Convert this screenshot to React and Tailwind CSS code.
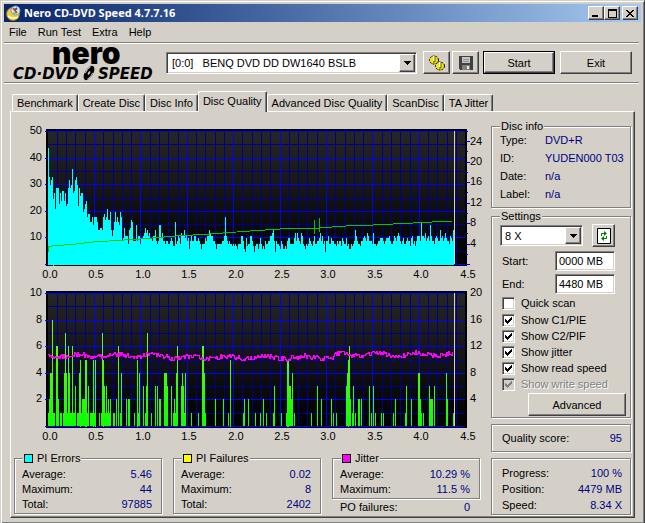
import { useState } from "react";

const raised = "bg-[#d4d0c8] border border-t-white border-l-white border-r-[#404040] border-b-[#404040] shadow-[inset_-1px_-1px_0_#808080]";
const sunken = "bg-white border border-t-[#808080] border-l-[#808080] border-r-white border-b-white shadow-[inset_1px_1px_0_#404040,inset_-1px_-1px_0_#d4d0c8]";
const etched = "border border-[#808080] shadow-[1px_1px_0_#fff,inset_1px_1px_0_#fff]";

// one sample per pixel column
const pie = [
  44, 33, 30, 32, 33, 25, 27, 21, 29, 29, 29, 23, 27, 24, 28, 28, 24, 27, 22, 23, 29, 32, 29, 30, 36, 27, 28, 32, 33, 30,
  22, 29, 26, 27, 27, 20, 21, 23, 24, 18, 19, 19, 16, 16, 18, 15, 18, 18, 18, 16, 13, 13, 14, 14, 13, 18, 19, 17, 18, 21,
  17, 17, 20, 13, 11, 13, 16, 20, 16, 18, 16, 15, 20, 18, 9, 10, 14, 11, 11, 11, 8, 13, 14, 17, 16, 9, 9, 9, 15, 9,
  11, 11, 8, 10, 10, 11, 12, 14, 12, 13, 11, 12, 10, 10, 9, 11, 11, 13, 9, 8, 9, 15, 15, 10, 12, 9, 9, 8, 9, 9,
  8, 8, 9, 10, 9, 7, 7, 16, 8, 9, 11, 10, 8, 12, 11, 11, 13, 10, 11, 9, 10, 6, 9, 11, 9, 9, 11, 11, 9, 9,
  10, 9, 8, 6, 8, 8, 8, 10, 9, 11, 11, 13, 12, 11, 11, 9, 9, 8, 6, 8, 8, 8, 8, 8, 9, 9, 11, 18, 11, 9,
  8, 9, 8, 8, 7, 8, 7, 8, 7, 6, 8, 8, 8, 11, 11, 9, 6, 5, 10, 7, 8, 8, 11, 11, 9, 7, 5, 7, 8, 8,
  6, 8, 10, 8, 6, 7, 6, 9, 8, 8, 9, 9, 11, 11, 12, 13, 9, 5, 9, 8, 8, 7, 6, 9, 8, 6, 6, 7, 6, 9,
  10, 10, 8, 8, 8, 8, 10, 12, 9, 12, 10, 9, 8, 12, 11, 8, 7, 6, 8, 7, 8, 10, 9, 8, 7, 9, 11, 8, 8, 9,
  9, 10, 12, 9, 11, 8, 9, 5, 9, 9, 11, 8, 8, 10, 9, 9, 8, 8, 7, 9, 8, 9, 9, 7, 10, 9, 8, 8, 10, 7,
  8, 6, 6, 8, 7, 8, 9, 13, 11, 9, 8, 8, 7, 9, 9, 10, 11, 10, 9, 12, 11, 9, 9, 9, 8, 12, 8, 8, 7, 8,
  9, 9, 10, 10, 10, 9, 8, 9, 10, 10, 10, 11, 9, 8, 8, 9, 11, 10, 9, 11, 12, 11, 9, 8, 9, 10, 8, 8, 9, 10,
  9, 9, 7, 10, 11, 8, 9, 7, 9, 11, 11, 11, 9, 16, 11, 11, 10, 12, 9, 10, 11, 9, 15, 11, 9, 9, 8, 10, 11, 10,
  9, 9, 13, 10, 11, 9, 10, 12, 10, 9, 9, 8, 11, 10, 9, 13,
];

// [column, failures]
const pif = [
  [0, 1], [1, 2], [2, 4], [3, 4], [4, 8], [5, 1], [6, 1], [8, 6], [9, 6], [10, 2], [12, 1], [13, 1], [15, 1], [16, 4], [17, 7],
  [18, 4], [19, 1], [20, 6], [21, 4], [22, 1], [23, 1], [24, 6], [25, 1], [26, 1], [27, 3], [29, 1], [30, 1], [31, 4], [32, 5],
  [33, 1], [34, 2], [35, 2], [36, 2], [37, 5], [38, 5], [39, 1], [40, 3], [42, 1], [43, 1], [44, 1], [45, 5], [46, 1], [47, 5],
  [51, 1], [53, 1], [54, 7], [55, 5], [56, 3], [57, 1], [58, 3], [59, 1], [60, 2], [61, 1], [62, 2], [65, 1], [66, 1], [68, 2],
  [70, 6], [72, 1], [73, 4], [78, 2], [80, 2], [81, 2], [86, 1], [89, 5], [90, 1], [91, 4], [95, 3], [97, 1], [98, 3], [99, 7],
  [103, 1], [107, 3], [109, 3], [111, 2], [112, 2], [116, 4], [117, 4], [118, 4], [119, 3], [123, 3], [125, 1], [126, 2], [127, 1],
  [128, 4], [129, 6], [133, 3], [134, 4], [135, 3], [136, 1], [137, 4], [143, 1], [150, 1], [154, 6], [155, 6], [156, 4], [157, 1],
  [167, 2], [175, 2], [180, 1], [182, 5], [195, 1], [196, 2], [200, 2], [207, 1], [212, 1], [215, 2], [218, 1], [225, 1], [226, 3],
  [233, 1], [238, 1], [239, 5], [240, 5], [241, 3], [242, 3], [243, 2], [244, 4], [246, 1], [263, 1], [269, 3], [273, 2], [283, 2],
  [285, 1], [288, 1], [298, 3], [299, 4], [300, 5], [301, 6], [302, 2], [304, 1], [305, 3], [307, 1], [310, 2], [311, 2], [313, 2],
  [321, 3], [323, 1], [325, 3], [327, 1], [333, 1], [335, 1], [345, 1], [347, 2], [357, 1], [358, 3], [363, 2], [370, 4], [371, 4],
  [372, 2], [373, 1], [375, 1], [381, 3], [382, 2], [383, 2], [384, 2], [386, 3], [398, 4], [399, 2], [405, 1],
];

const X0 = 34;
const TOP = 11;
const BOTTOM = 144;
const STEP_X = 9.28;

const jitter = Array.from({ length: 405 }, (_, i) => {
  const r = Math.sin(i * 127.1 + 3) * 43758.5453;
  const noise = (r - Math.floor(r) - 0.5) * 5;
  const base = i < 120 ? 73 : i < 285 ? 75 : 72;
  const y = Math.round(base + noise + Math.sin(i / 6) * 1.2);
  return `${X0 + i},${y} ${X0 + i + 1},${y}`;
}).join(" ");

function Chart({ label, left, right, rightStep, ticks, children }) {
  const vertical = Array.from({ length: 45 }, (_, i) => i);
  const horizontal = Array.from({ length: 11 }, (_, i) => i);
  return (
    <svg viewBox="0 0 471 162" role="img" aria-label={label} className="block w-full font-['Liberation_Sans',Arial,sans-serif] text-[11px]" shapeRendering="crispEdges">
      <defs>
        <linearGradient id="plot" x1="0" y1="0" x2="0" y2="1">
          <stop offset="0" stopColor="#262626" />
          <stop offset="1" stopColor="#000" />
        </linearGradient>
        <linearGradient id="bars" gradientUnits="userSpaceOnUse" x1="0" y1={TOP} x2="0" y2={BOTTOM}>
          <stop offset="0" stopColor="#90ff00" />
          <stop offset="1" stopColor="#0cff00" />
        </linearGradient>
      </defs>
      <rect x="32" y={TOP - 2} width="421" height={BOTTOM - TOP + 4} fill="#000" />
      <rect x={X0} y={TOP} width="417" height={BOTTOM - TOP} fill="url(#plot)" />
      {vertical.filter((i) => i % 5).map((i) => (
        <rect key={i} x={Math.round(33.6 + i * STEP_X)} y={TOP} width="1" height={BOTTOM - TOP} fill="#00008b" />
      ))}
      {horizontal.filter((i) => i % 2).map((i) => (
        <rect key={i} x={X0} y={Math.round(TOP + i * 13.3)} width="417" height="1" fill="#00008b" />
      ))}
      {vertical.filter((i) => i && i % 5 === 0).map((i) => (
        <rect key={i} x={Math.round(33.6 + i * STEP_X)} y={TOP} width="1" height={BOTTOM - TOP} fill="#0000ff" />
      ))}
      {horizontal.filter((i) => i % 2 === 0).map((i) => (
        <rect key={i} x="31" y={Math.round(TOP + i * 13.3)} width="420" height="1" fill="#0000ff" />
      ))}
      {ticks && Array.from({ length: 14 }, (_, i) => (
        <rect key={i} x="452" y={Math.round(BOTTOM - i * 10.25)} width={i % 2 ? 2 : 4} height="1" fill="#0000ff" />
      ))}
      {children}
      <rect x="440" y={TOP} width="1" height={BOTTOM - TOP} fill="#d4d0c8" />
      {left.map((t, i) => (
        <text key={t} x="28" y={Math.round(TOP + 3 + i * 26.6)} textAnchor="end">{t}</text>
      ))}
      {right.map((t, i) => (
        <text key={t} x="456" y={Math.round(BOTTOM + 3 - (right.length - i) * rightStep)}>{t}</text>
      ))}
      {Array.from({ length: 10 }, (_, i) => (
        <text key={i} x={Math.round(36 + i * 46.4)} y="158" textAnchor="middle">{(i / 2).toFixed(1)}</text>
      ))}
    </svg>
  );
}

function Group({ title, swatch, className = "", children }) {
  return (
    <fieldset className={`min-w-0 ${etched} ${className}`}>
      <legend className="ml-2 flex items-center gap-1 bg-[#d4d0c8] px-px leading-3">
        {swatch && <span className={`size-[9px] border border-black ${swatch}`} />}
        {title}
      </legend>
      {children}
    </fieldset>
  );
}

function Rows({ items, className = "leading-[15px]" }) {
  return (
    <dl className={className}>
      {items.map(([k, v]) => (
        <div key={k} className="flex justify-between">
          <dt>{k}</dt>
          <dd className="text-[#000080]">{v}</dd>
        </div>
      ))}
    </dl>
  );
}

function Dropdown({ label, value, className, pad }) {
  return (
    <div className={`relative ${className}`}>
      <select aria-label={label} className={`h-full w-full appearance-none ${pad} outline-none ${sunken}`}>
        <option>{value}</option>
      </select>
      <span className={`pointer-events-none absolute inset-y-[2px] right-[2px] flex w-4 items-center justify-center ${raised}`}>
        <svg width="7" height="4" shapeRendering="crispEdges"><path d="M0 0h7v1H6v1H5v1H4v1H3V3H2V2H1V1H0z" /></svg>
      </span>
    </div>
  );
}

function Check({ label, on, disabled }) {
  const [checked, setChecked] = useState(on);
  return (
    <label className="flex h-4 items-center gap-[6px]">
      <span className="grid">
        <input
          type="checkbox"
          checked={checked}
          disabled={disabled}
          onChange={(e) => setChecked(e.target.checked)}
          className={`col-start-1 row-start-1 size-[13px] appearance-none ${sunken} disabled:bg-[#d4d0c8]`}
        />
        {checked && (
          <svg viewBox="0 0 13 13" className="pointer-events-none col-start-1 row-start-1 size-[13px]" shapeRendering="crispEdges">
            <path d="M3 5h1v1h1v1h1V6h1V5h1V4h1V3h1v3H9v1H8v1H7v1H6v1H5V9H4V8H3z" fill={disabled ? "#808080" : "#000"} />
          </svg>
        )}
      </span>
      <span className={disabled ? "text-[#808080] [text-shadow:1px_1px_0_#fff]" : ""}>{label}</span>
    </label>
  );
}

function Logo() {
  return (
    <svg width="148" height="37" viewBox="0 0 148 37" role="img" aria-label="Nero CD-DVD Speed" className="overflow-visible">
      <text x="39" y="20" className="font-['Inter',sans-serif] text-[30px] font-black">nero</text>
      <g className="font-['DejaVu_Sans',sans-serif] text-[15px] font-bold italic">
        <text x="0" y="35">CD·DVD</text>
        <text x="85" y="35">SPEED</text>
      </g>
      <g transform="rotate(32 76 29)">
        <ellipse cx="76" cy="29" rx="4" ry="8" />
        <ellipse cx="76" cy="29" rx="1" ry="2" fill="#d4d0c8" />
        <path d="M74 23q-2 3-1 8M78 35q2-3 1-8" stroke="#d4d0c8" fill="none" />
      </g>
    </svg>
  );
}

function DiscIcon() {
  return (
    <svg width="16" height="16" viewBox="0 0 16 16" aria-hidden="true">
      <circle cx="7" cy="9" r="6.5" fill="#e8d040" stroke="#907818" />
      <path d="M2 11q5 4 10 1" stroke="#fff8b0" strokeWidth="2" fill="none" />
      <circle cx="9.5" cy="5.5" r="4.5" fill="#d8ecf4" stroke="#8098a8" />
      <path d="M7 3l4 5" stroke="#d84020" strokeWidth="2" />
      <path d="M11 3l-2 2" stroke="#2858b0" strokeWidth="2" />
      <path d="M7 8h3" stroke="#30a050" />
    </svg>
  );
}

function GearsIcon() {
  return (
    <svg width="18" height="18" viewBox="0 0 18 18" aria-hidden="true">
      {[[6, 6], [12, 12]].map(([x, y]) => (
        <g key={x}>
          <ellipse cx={x} cy={y} rx="4.5" ry="4" fill="#f4e800" stroke="#000" strokeDasharray="2 1" />
          <path d={`M${x} ${y - 4}v5`} stroke="#fff" strokeWidth="2" />
          <path d={`M${x + 1} ${y - 4}v6h-2`} stroke="#605800" fill="none" />
        </g>
      ))}
    </svg>
  );
}

function SaveIcon() {
  return (
    <svg width="14" height="14" viewBox="0 0 14 14" shapeRendering="crispEdges" aria-hidden="true">
      <path d="M0 0h14v14H1L0 13z" fill="#404040" />
      <path d="M3 1h8v6H3z" fill="#c8c8c8" />
      <path d="M4 3h6v1H4zM4 5h6v1H4z" fill="#909090" />
      <path d="M3 9h8v5H3z" fill="#808080" />
      <path d="M8 10h2v3H8z" fill="#e8e8e8" />
    </svg>
  );
}

const tabs = ["Benchmark", "Create Disc", "Disc Info", "Disc Quality", "Advanced Disc Quality", "ScanDisc", "TA Jitter"];
const winButton = `flex h-[14px] w-4 items-center justify-center ${raised}`;
const statRows = "pt-[3px] pr-[9px] pb-px pl-[7px] leading-[15px]";

export default function App() {
  const [tab, setTab] = useState("Disc Quality");
  return (
    <div className="flex min-h-screen flex-col border border-t-[#d4d0c8] border-l-[#d4d0c8] border-r-[#404040] border-b-[#404040] bg-[#d4d0c8] p-[3px] font-['Liberation_Sans',Arial,sans-serif] text-[11px] leading-4 text-black shadow-[inset_1px_1px_0_#fff,inset_-1px_-1px_0_#808080]">
      <header className="flex h-[18px] items-center bg-linear-to-r from-[#0a246a] to-[#a6caf0] pr-[3px] pl-[2px]">
        <DiscIcon />
        <h1 className="ml-[2px] flex-1 font-['Noto_Sans',sans-serif] text-[11px] font-bold text-white">Nero CD-DVD Speed 4.7.7.16</h1>
        <button aria-label="Minimize" className={winButton}>
          <svg width="10" height="8" shapeRendering="crispEdges"><path d="M1 6h6v2H1z" /></svg>
        </button>
        <button aria-label="Maximize" className={winButton}>
          <svg width="9" height="9" shapeRendering="crispEdges"><path d="M0 0h9v9H0zM1 2v6h7V2z" fillRule="evenodd" /></svg>
        </button>
        <button aria-label="Close" className={`ml-[2px] ${winButton}`}>
          <svg width="8" height="7" shapeRendering="crispEdges"><path d="M0 0h2v1h1v1h2V1h1V0h2v1H7v1H6v1H5v1h1v1h1v1h1v1H6V6H5V5H3v1H2v1H0V6h1V5h1V4h1V3H2V2H1V1H0z" /></svg>
        </button>
      </header>

      <nav className="flex h-5 items-center gap-[11px] pl-[5px]">
        {["File", "Run Test", "Extra", "Help"].map((m) => (
          <button key={m}>{m}</button>
        ))}
      </nav>

      <div className="mr-[2px] flex h-[41px] items-center border-y border-[#808080] pr-[7px] pl-[9px] shadow-[0_1px_0_#fff,inset_0_1px_0_#fff]">
        <Logo />
        <Dropdown label="Drive" value={"[0:0]\u00a0\u00a0\u00a0BENQ DVD DD DW1640 BSLB"} className="ml-[5px] h-[22px] flex-1" pad="pl-[5px]" />
        <button aria-label="Options" className={`ml-[6px] flex h-[23px] w-[27px] items-center justify-center ${raised}`}><GearsIcon /></button>
        <button aria-label="Save" className={`ml-[2px] flex h-[23px] w-[27px] items-center justify-center ${raised}`}><SaveIcon /></button>
        <div className="ml-1 border border-black">
          <button className={`block h-[21px] w-[70px] ${raised}`}>Start</button>
        </div>
        <button className={`ml-[5px] h-[23px] w-[72px] ${raised}`}>Exit</button>
      </div>

      <main className="mt-2 flex flex-1 flex-col pr-[6px] pb-[2px] pl-[6px]">
        <div role="tablist" className="flex items-end pl-[2px]">
          {tabs.map((t) => (
            <button
              key={t}
              role="tab"
              aria-selected={t === tab}
              onClick={() => setTab(t)}
              className={`rounded-t-[2px] border-t border-r border-l border-t-white border-r-[#404040] border-l-white px-1 shadow-[inset_-1px_0_0_#808080] ${t === tab ? "z-10 -mb-px h-[21px] bg-[#d4d0c8] pb-[3px]" : "h-[17px]"}`}
            >
              {t}
            </button>
          ))}
        </div>

        <div className={`flex flex-1 gap-[6px] px-[3px] pt-2 pb-[2px] ${raised}`}>
          <div className="min-w-0 flex-1">
            <Chart label="PI errors and read speed" left={[50, 40, 30, 20, 10]} right={[24, 20, 16, 12, 8, 4]} rightStep={20.4} ticks>
              {pie.map((v, i) => (
                <rect key={i} x={X0 + i} y={Math.round(BOTTOM + 1 - v * 2.66)} width="1" height={Math.round(v * 2.66)} fill="#00ffff" />
              ))}
              <polyline
                fill="none"
                stroke="#00c800"
                points="34,132 34,127 38,126 62,124 79,122 126,119 162,116 196,114 236,111 266,109 300,108 300,100 300,114 300,108 305,108 305,98 305,112 305,108 332,106 359,105 399,103 438,101"
              />
            </Chart>
            <Chart label="PI failures and jitter" left={[10, 8, 6, 4, 2]} right={[20, 16, 12, 8, 4]} rightStep={26.6}>
              {pif.map(([i, v]) => (
                <rect key={i} x={X0 + i} y={Math.round(BOTTOM - v * 13.3)} width="1" height={Math.round(v * 13.3)} fill="url(#bars)" />
              ))}
              <polyline fill="none" stroke="#ff00ff" points={jitter} />
            </Chart>

            <div className="mt-2 grid grid-cols-3 items-start gap-[11px] pr-[5px]">
              <Group title="PI Errors" swatch="bg-[#00ffff]">
                <Rows className={statRows} items={[["Average:", "5.46"], ["Maximum:", "44"], ["Total:", "97885"]]} />
              </Group>
              <Group title="PI Failures" swatch="bg-[#ffff00]">
                <Rows className={statRows} items={[["Average:", "0.02"], ["Maximum:", "8"], ["Total:", "2402"]]} />
              </Group>
              <div>
                <Group title="Jitter" swatch="bg-[#ff00ff]">
                  <Rows className={statRows} items={[["Average:", "10.29 %"], ["Maximum:", "11.5 %"]]} />
                </Group>
                <Rows className="mt-px pr-[10px] pl-2 leading-[15px]" items={[["PO failures:", "0"]]} />
              </div>
            </div>
          </div>

          <aside className="w-[140px] shrink-0">
            <Group title="Disc info">
              <dl className="grid grid-cols-[45px_1fr] gap-y-[2px] pb-[5px] pl-2">
                {[["Type:", "DVD+R"], ["ID:", "YUDEN000 T03"], ["Date:", "n/a"], ["Label:", "n/a"]].map(([k, v]) => (
                  <div key={k} className="contents">
                    <dt>{k}</dt>
                    <dd className="whitespace-nowrap text-[#000080]">{v}</dd>
                  </div>
                ))}
              </dl>
            </Group>

            <Group title="Settings" className="mt-[2px]">
              <div className="pt-[2px] pr-1 pb-px pl-[10px]">
                <div className="-ml-[2px] flex items-center gap-[9px]">
                  <Dropdown label="Speed" value="8 X" className="h-[21px] w-[83px]" pad="pl-1" />
                  <button aria-label="Refresh" className={`flex h-[23px] w-[23px] items-center justify-center ${raised}`}>
                    <svg width="14" height="16" viewBox="0 0 14 16" aria-hidden="true">
                      <path d="M.5.5h13v15H.5z" fill="#fff" stroke="#000" />
                      <path d="M4.5 8V5.500H8M9.500 8v2.500H6" stroke="#008000" fill="none" />
                      <path d="M7 3l3 2.500L7 8zM7 8l-3 2.500L7 13z" fill="#008000" />
                    </svg>
                  </button>
                </div>
                <div className="mt-1 flex items-center justify-between pr-[11px]">
                  <label htmlFor="start">Start:</label>
                  <input id="start" defaultValue="0000 MB" className={`h-5 w-[60px] px-[3px] outline-none ${sunken}`} />
                </div>
                <div className="mt-[3px] flex items-center justify-between pr-[11px]">
                  <label htmlFor="end">End:</label>
                  <input id="end" defaultValue="4480 MB" className={`h-5 w-[60px] px-[3px] outline-none ${sunken}`} />
                </div>
                <div className="mt-px mb-px"><Check label="Quick scan" on={false} /></div>
                <Check label="Show C1/PIE" on />
                <Check label="Show C2/PIF" on />
                <Check label="Show jitter" on />
                <Check label="Show read speed" on />
                <Check label="Show write speed" on disabled />
                <button className={`mt-px ml-auto block h-[23px] w-[98px] ${raised}`}>Advanced</button>
              </div>
            </Group>

            <div className={`mt-[6px] ${etched}`}>
              <Rows className="py-[5px] pr-2 pl-[10px]" items={[["Quality score:", "95"]]} />
            </div>
            <div className={`mt-[6px] ${etched}`}>
              <Rows className="pt-[6px] pr-2 pb-px pl-[10px]" items={[["Progress:", "100 %"], ["Position:", "4479 MB"], ["Speed:", "8.34 X"]]} />
            </div>
          </aside>
        </div>
      </main>
    </div>
  );
}
